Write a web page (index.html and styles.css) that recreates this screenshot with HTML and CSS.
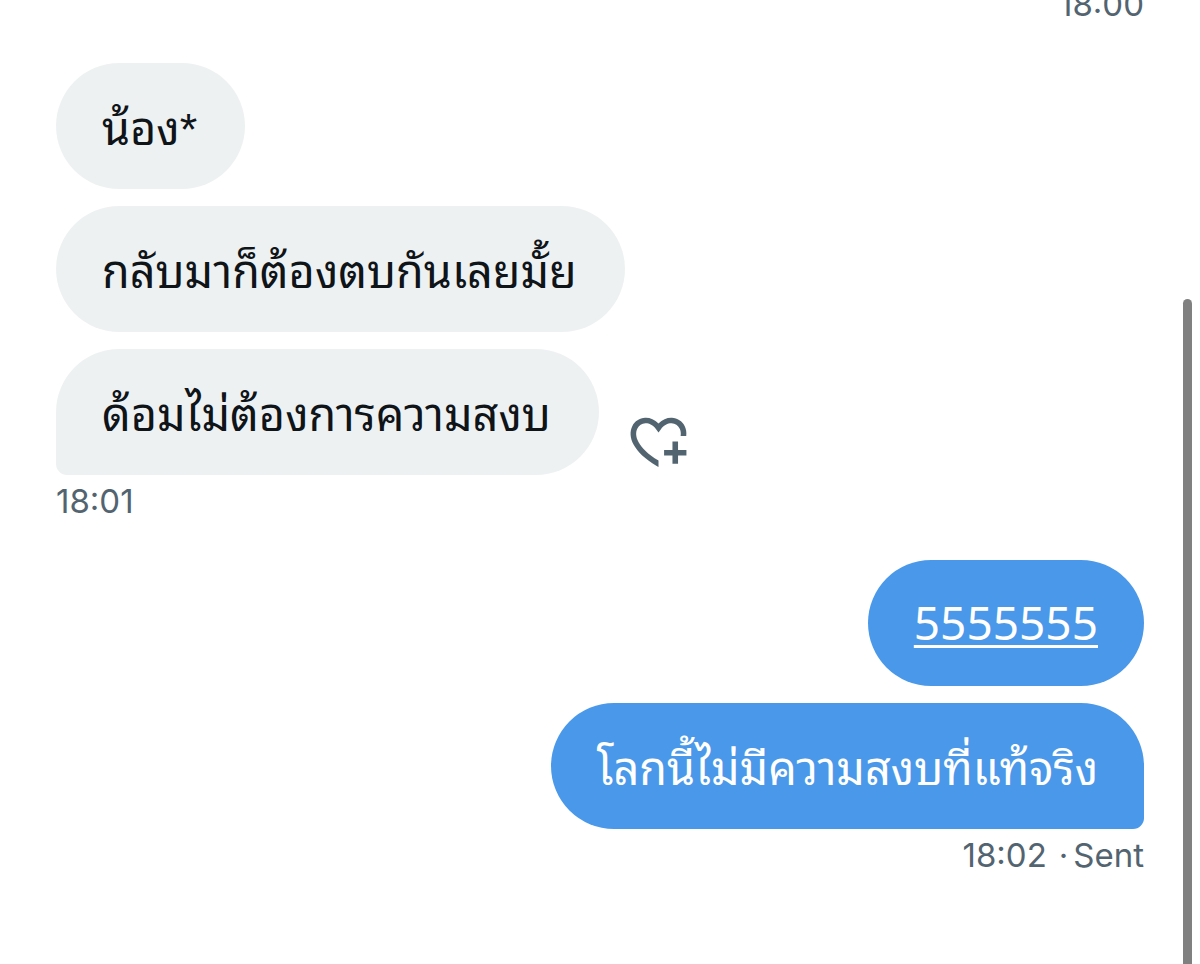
FILE: index.html
```html
<!DOCTYPE html>
<html lang="th">
<head>
    <meta charset="UTF-8">
    <meta name="viewport" content="width=device-width, initial-scale=1.0">
    <title>Messages</title>
    <link rel="stylesheet" href="styles.css">
</head>
<body>
    <main class="chat">
        <div class="group sent">
            <div class="meta"><time>18:00</time></div>
        </div>

        <div class="group received">
            <p class="bubble">น้อง*</p>
            <p class="bubble">กลับมาก็ต้องตบกันเลยมั้ย</p>
            <div class="row">
                <p class="bubble last">ด้อมไม่ต้องการความสงบ</p>
                <button class="react" aria-label="Add reaction">
                    <svg viewBox="0 0 24 24">
                        <path d="M17 12v3h-2.998v2h3v3h2v-3h3v-2h-3.001v-3H17zm-5 6.839c-3.871-2.34-6.053-4.639-7.127-6.609-1.112-2.04-1.031-3.7-.479-4.82.561-1.13 1.667-1.84 2.91-1.91 1.222-.06 2.68.51 3.892 2.16l.806 1.09.805-1.09c1.211-1.65 2.668-2.22 3.89-2.16 1.242.07 2.347.78 2.908 1.91.334.677.49 1.554.321 2.59h2.011c.153-1.283-.039-2.469-.539-3.48-.887-1.79-2.647-2.91-4.601-3.01-1.65-.09-3.367.56-4.796 2.01-1.43-1.45-3.147-2.1-4.798-2.01-1.954.1-3.714 1.22-4.601 3.01-.896 1.81-.846 4.17.514 6.67 1.353 2.48 4.003 5.12 8.382 7.67l.502.299v-2.32z"/>
                    </svg>
                </button>
            </div>
            <div class="meta"><time>18:01</time></div>
        </div>

        <div class="group sent">
            <p class="bubble"><a href="tel:5555555">5555555</a></p>
            <p class="bubble last">โลกนี้ไม่มีความสงบที่แท้จริง</p>
            <div class="meta"><time>18:02</time><span class="dot">·</span><span>Sent</span></div>
        </div>
    </main>
    <div class="scrollbar"></div>
</body>
</html>
```
FILE: styles.css
```css
* {
    box-sizing: border-box;
}

body {
    margin: 0;
    background-color: #fff;
    color: #0f1419;
    overflow: hidden;
}

/* newest message stays at the bottom, older ones run off the top */
.chat {
    display: flex;
    flex-direction: column;
    justify-content: flex-end;
    gap: 39px;
    height: 100vh;
    padding: 0 56px 89px;
}

.group {
    display: flex;
    flex-direction: column;
    flex-shrink: 0;
    align-items: flex-start;
    gap: 17px;
}

.group.sent {
    align-items: flex-end;
}

.row {
    display: flex;
    align-items: flex-end;
    gap: 26px;
}

.bubble {
    margin: 0;
    padding: 37px 46px 29px;
    border-radius: 63px;
    background-color: #eef1f2;
    font-family: "Liberation Sans", "Noto Sans Thai Looped", "Noto Sans Thai", sans-serif;
    font-size: 45px;
    line-height: 60px;
}

.received .bubble {
    padding-right: 48px;
}

.received .last {
    border-bottom-left-radius: 11px;
}

.sent .bubble {
    background-color: #4a98e9;
    color: #fff;
}

.sent .last {
    border-bottom-right-radius: 11px;
}

.bubble a {
    display: block;
    margin-bottom: 10px;
    color: inherit;
    font-family: "Noto Sans", sans-serif;
    font-size: 46px;
    line-height: 50px;
    text-decoration-thickness: 3px;
    text-underline-offset: 5px;
}

.react {
    display: flex;
    padding: 0;
    border: none;
    background: none;
    cursor: pointer;
}

.react svg {
    width: 67px;
    height: 67px;
    fill: #536471;
}

.meta {
    display: flex;
    margin-top: -11px;
    color: #536471;
    font-family: Inter, sans-serif;
    font-size: 33px;
    line-height: 40px;
}

.dot {
    margin: 0 5px 0 12px;
}

.scrollbar {
    position: absolute;
    top: 299px;
    right: 8px;
    bottom: 0;
    width: 9px;
    border-radius: 5px 5px 0 0;
    background-color: #808080;
}
```
